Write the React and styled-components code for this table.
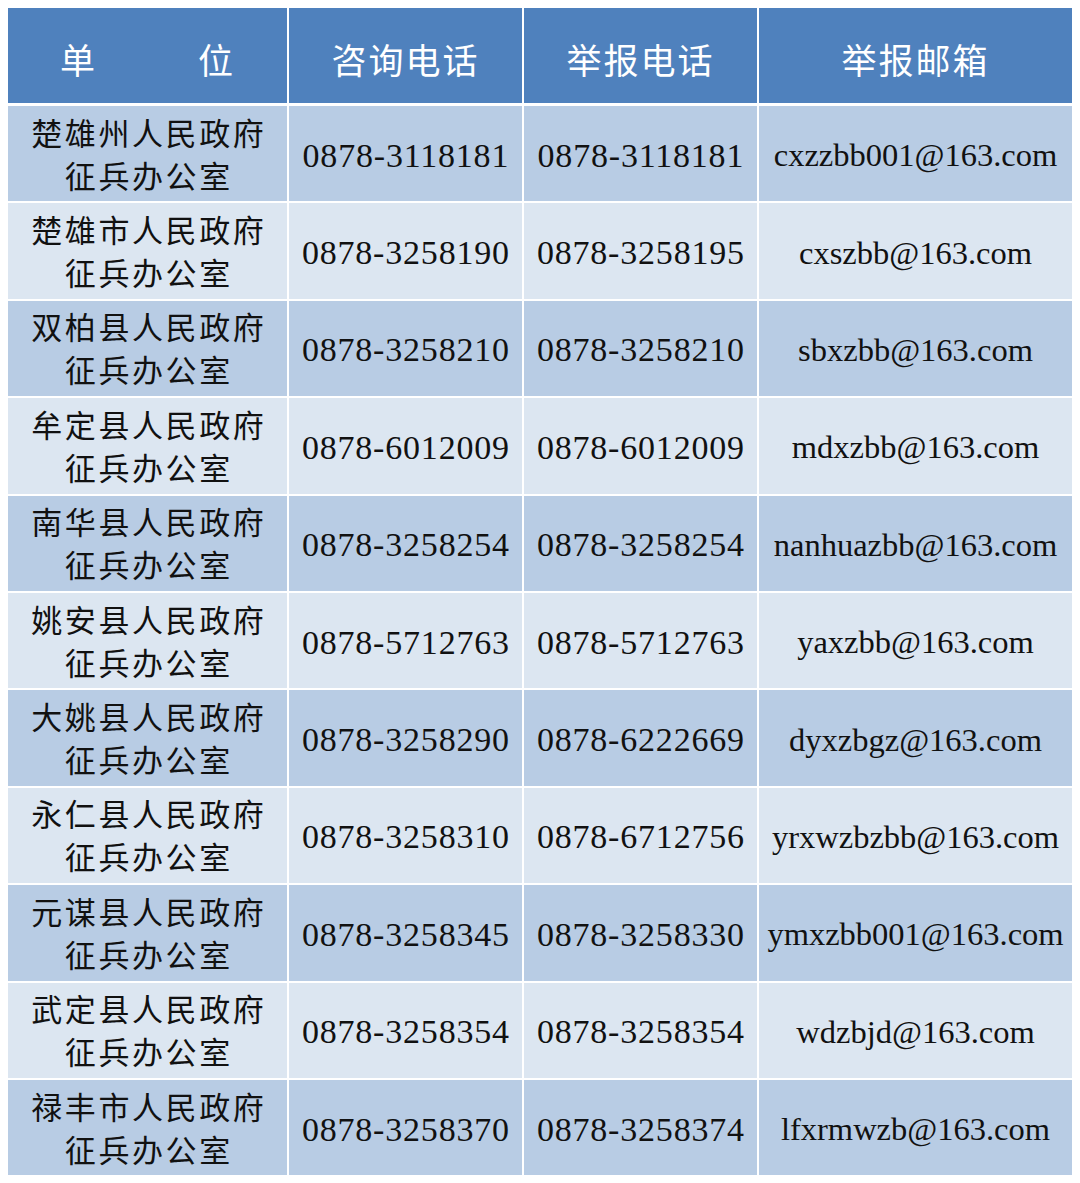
import React from "react";
import styled, { createGlobalStyle } from "styled-components";

const GlobalStyle = createGlobalStyle`
  html, body { margin: 0; padding: 0; background: #ffffff; }
  body { padding: 8px; }
`;

const rows = [
  ["楚雄州人民政府", "0878-3118181", "0878-3118181", "cxzzbb001@163.com"],
  ["楚雄市人民政府", "0878-3258190", "0878-3258195", "cxszbb@163.com"],
  ["双柏县人民政府", "0878-3258210", "0878-3258210", "sbxzbb@163.com"],
  ["牟定县人民政府", "0878-6012009", "0878-6012009", "mdxzbb@163.com"],
  ["南华县人民政府", "0878-3258254", "0878-3258254", "nanhuazbb@163.com"],
  ["姚安县人民政府", "0878-5712763", "0878-5712763", "yaxzbb@163.com"],
  ["大姚县人民政府", "0878-3258290", "0878-6222669", "dyxzbgz@163.com"],
  ["永仁县人民政府", "0878-3258310", "0878-6712756", "yrxwzbzbb@163.com"],
  ["元谋县人民政府", "0878-3258345", "0878-3258330", "ymxzbb001@163.com"],
  ["武定县人民政府", "0878-3258354", "0878-3258354", "wdzbjd@163.com"],
  ["禄丰市人民政府", "0878-3258370", "0878-3258374", "lfxrmwzb@163.com"],
];

const Table = styled.div`
  width: 1064px;
  display: flex;
  flex-direction: column;
  gap: 2px;
  background: #ffffff;
`;

const Row = styled.div`
  display: grid;
  grid-template-columns: 279px 233px 233px 313px;
  column-gap: 2px;
  height: ${(p) => (p.$header ? "95px" : "95.4px")};
  margin-bottom: ${(p) => (p.$header ? "1px" : "0")};
`;

const HeaderCell = styled.div`
  background: #4f81bd;
  color: #ffffff;
  display: flex;
  align-items: center;
  justify-content: center;
  padding-top: 6px;
  box-sizing: border-box;
  font-family: "Liberation Serif", "Noto Sans CJK SC", serif;
  font-size: 35px;
  letter-spacing: 2px;
  gap: ${(p) => p.$gap || "0px"};
`;

const Cell = styled.div`
  background: ${(p) => (p.$even ? "#dce6f1" : "#b8cce4")};
  color: #111111;
  display: flex;
  flex-direction: column;
  align-items: center;
  justify-content: center;
  padding-top: 4px;
  box-sizing: border-box;
  white-space: nowrap;
`;

const UnitLine = styled.span`
  font-family: "Liberation Serif", "Noto Sans CJK SC", serif;
  font-size: 31px;
  line-height: 43px;
  letter-spacing: 2.6px;
  margin-right: -2.6px;
`;

const Phone = styled.span`
  font-family: "Liberation Serif", "Noto Sans CJK SC", serif;
  font-size: 34px;
  letter-spacing: 0.8px;
  margin-right: -0.8px;
`;

const Email = styled.span`
  font-family: "Liberation Serif", "Noto Sans CJK SC", serif;
  font-size: 32.5px;
`;

export default function App() {
  return (
    <>
      <GlobalStyle />
      <Table>
        <Row $header>
          <HeaderCell $gap="101px">
            <span>单</span>
            <span>位</span>
          </HeaderCell>
          <HeaderCell>咨询电话</HeaderCell>
          <HeaderCell>举报电话</HeaderCell>
          <HeaderCell>举报邮箱</HeaderCell>
        </Row>
        {rows.map(([name, consult, report, email], i) => (
          <Row key={name}>
            <Cell $even={i % 2 === 1}>
              <UnitLine>{name}</UnitLine>
              <UnitLine>征兵办公室</UnitLine>
            </Cell>
            <Cell $even={i % 2 === 1}>
              <Phone>{consult}</Phone>
            </Cell>
            <Cell $even={i % 2 === 1}>
              <Phone>{report}</Phone>
            </Cell>
            <Cell $even={i % 2 === 1}>
              <Email>{email}</Email>
            </Cell>
          </Row>
        ))}
      </Table>
    </>
  );
}
